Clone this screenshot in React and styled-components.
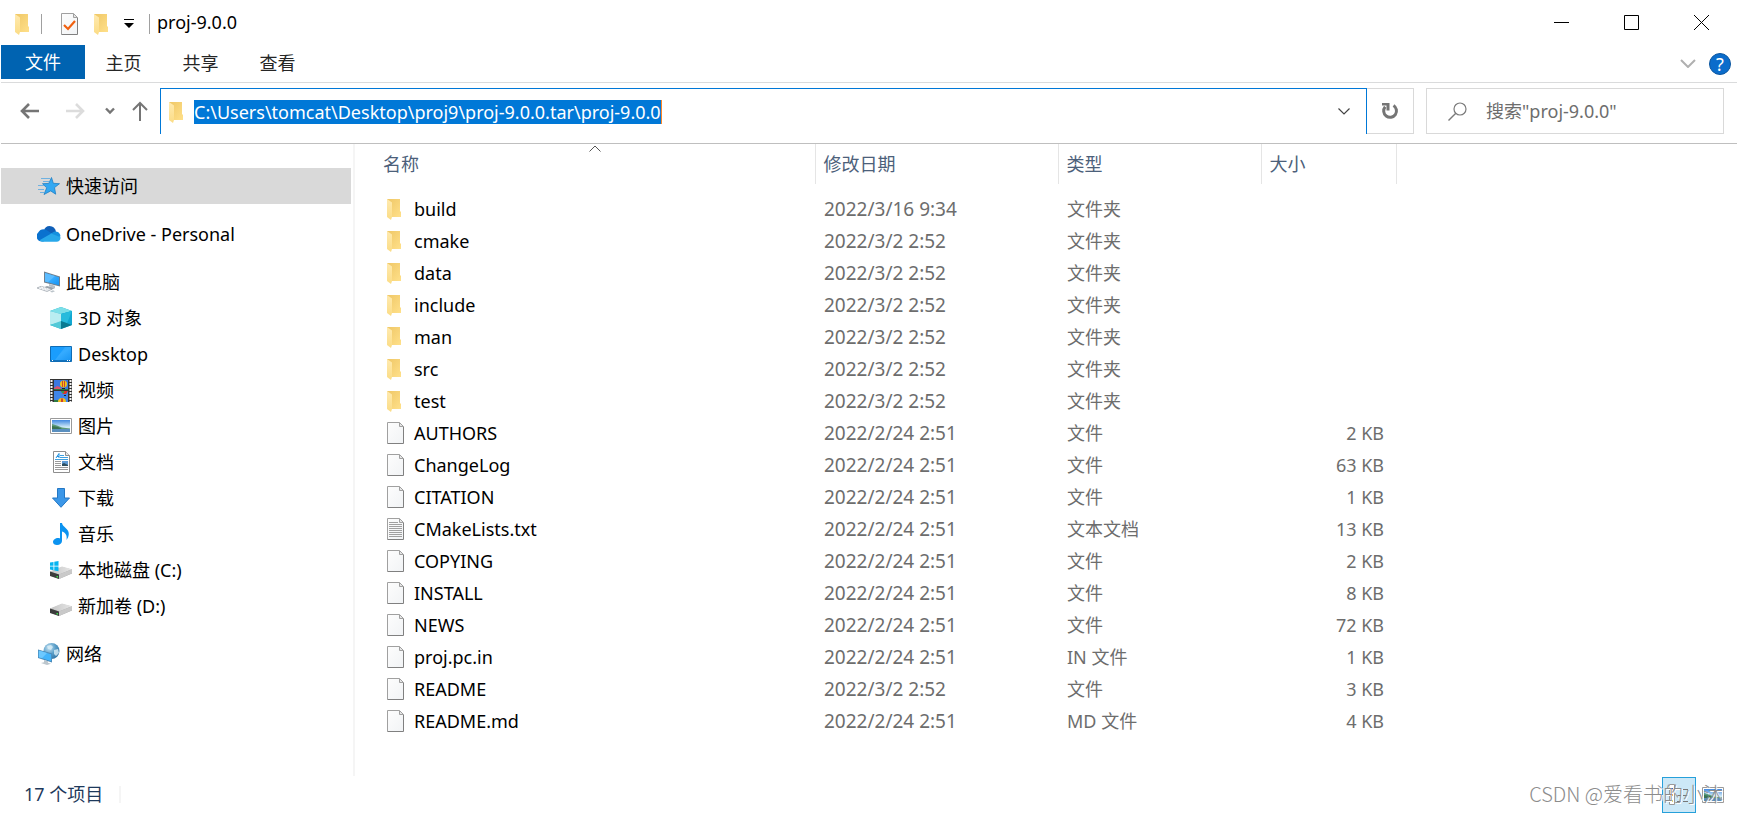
import React, { useEffect, useRef } from "react";
import styled, { createGlobalStyle } from "styled-components";

const quickAccess = [{ name: "快速访问", icon: StarIcon, active: true }];
const oneDrive = [{ name: "OneDrive - Personal", icon: CloudIcon }];
const thisPc = [
  { name: "此电脑", icon: ComputerIcon },
  { name: "3D 对象", icon: CubeIcon, child: true },
  { name: "Desktop", icon: DesktopIcon, child: true },
  { name: "视频", icon: VideoIcon, child: true },
  { name: "图片", icon: PictureIcon, child: true },
  { name: "文档", icon: DocumentIcon, child: true },
  { name: "下载", icon: DownloadIcon, child: true },
  { name: "音乐", icon: MusicIcon, child: true },
  { name: "本地磁盘 (C:)", icon: SystemDriveIcon, child: true },
  { name: "新加卷 (D:)", icon: DriveIcon, child: true },
];
const network = [{ name: "网络", icon: NetworkIcon }];
const groups = [quickAccess, oneDrive, thisPc, network];

const files = [
  { name: "build", date: "2022/3/16 9:34", type: "文件夹", icon: FolderIcon },
  { name: "cmake", date: "2022/3/2 2:52", type: "文件夹", icon: FolderIcon },
  { name: "data", date: "2022/3/2 2:52", type: "文件夹", icon: FolderIcon },
  { name: "include", date: "2022/3/2 2:52", type: "文件夹", icon: FolderIcon },
  { name: "man", date: "2022/3/2 2:52", type: "文件夹", icon: FolderIcon },
  { name: "src", date: "2022/3/2 2:52", type: "文件夹", icon: FolderIcon },
  { name: "test", date: "2022/3/2 2:52", type: "文件夹", icon: FolderIcon },
  { name: "AUTHORS", date: "2022/2/24 2:51", type: "文件", size: "2 KB", icon: FileIcon },
  { name: "ChangeLog", date: "2022/2/24 2:51", type: "文件", size: "63 KB", icon: FileIcon },
  { name: "CITATION", date: "2022/2/24 2:51", type: "文件", size: "1 KB", icon: FileIcon },
  { name: "CMakeLists.txt", date: "2022/2/24 2:51", type: "文本文档", size: "13 KB", icon: TextFileIcon },
  { name: "COPYING", date: "2022/2/24 2:51", type: "文件", size: "2 KB", icon: FileIcon },
  { name: "INSTALL", date: "2022/2/24 2:51", type: "文件", size: "8 KB", icon: FileIcon },
  { name: "NEWS", date: "2022/2/24 2:51", type: "文件", size: "72 KB", icon: FileIcon },
  { name: "proj.pc.in", date: "2022/2/24 2:51", type: "IN 文件", size: "1 KB", icon: FileIcon },
  { name: "README", date: "2022/3/2 2:52", type: "文件", size: "3 KB", icon: FileIcon },
  { name: "README.md", date: "2022/2/24 2:51", type: "MD 文件", size: "4 KB", icon: FileIcon },
];

function App() {
  const pathInput = useRef(null);

  useEffect(() => {
    pathInput.current.focus();
    pathInput.current.select();
  }, []);

  return (
    <Window>
      <GlobalStyle />
      <Gradients />
      <TitleBar>
        <QuickTools>
          <FolderIcon />
          <Divider />
          <IconButton aria-label="属性">
            <CheckedPageIcon />
          </IconButton>
          <IconButton aria-label="新建文件夹">
            <FolderIcon />
          </IconButton>
          <IconButton aria-label="自定义快速访问工具栏">
            <svg width="10" height="9">
              <path d="M0 0h10v1H0zM0 4h10L5 9z" fill="#000" />
            </svg>
          </IconButton>
          <Divider />
        </QuickTools>
        <Title>proj-9.0.0</Title>
        <WindowButton aria-label="最小化">
          <svg width="16" height="16">
            <path d="M0 7.5h15" stroke="#000" />
          </svg>
        </WindowButton>
        <WindowButton aria-label="最大化">
          <svg width="16" height="16">
            <path d="M.5 .5h14v14H.5z" stroke="#000" fill="none" />
          </svg>
        </WindowButton>
        <WindowButton aria-label="关闭">
          <svg width="16" height="16">
            <path d="M0 0l15 15M15 0L0 15" stroke="#000" />
          </svg>
        </WindowButton>
      </TitleBar>

      <Ribbon>
        <FileTab>文件</FileTab>
        <Tab>主页</Tab>
        <Tab>共享</Tab>
        <Tab>查看</Tab>
        <RibbonTools>
          <IconButton aria-label="展开功能区">
            <svg width="16" height="9">
              <path d="M1 1l7 7 7-7" stroke="#b0b0b0" strokeWidth="2" fill="none" />
            </svg>
          </IconButton>
          <HelpButton aria-label="帮助">?</HelpButton>
        </RibbonTools>
      </Ribbon>

      <AddressRow>
        <History>
          <IconButton aria-label="后退">
            <svg width="20" height="18">
              <path d="M19 9H2M9 2L2 9l7 7" stroke="#757575" strokeWidth="2.6" fill="none" />
            </svg>
          </IconButton>
          <IconButton aria-label="前进">
            <svg width="20" height="18">
              <path d="M0 9h17M10 2l7 7-7 7" stroke="#dcdcdc" strokeWidth="2.6" fill="none" />
            </svg>
          </IconButton>
          <IconButton aria-label="最近浏览的位置">
            <svg width="10" height="8">
              <path d="M1 1.5l4 4 4-4" stroke="#757575" strokeWidth="2.4" fill="none" />
            </svg>
          </IconButton>
          <IconButton aria-label="上移">
            <svg width="16" height="20">
              <path d="M8 20V2M1 9l7-7 7 7" stroke="#757575" strokeWidth="2" fill="none" />
            </svg>
          </IconButton>
        </History>
        <AddressBar>
          <FolderIcon />
          <PathInput
            ref={pathInput}
            aria-label="地址"
            defaultValue="C:\Users\tomcat\Desktop\proj9\proj-9.0.0.tar\proj-9.0.0"
          />
          <AddressToggle aria-label="以前的位置">
            <svg width="12" height="7">
              <path d="M.5 .5L6 6 11.5 .5" stroke="#444" strokeWidth="1.2" fill="none" />
            </svg>
          </AddressToggle>
        </AddressBar>
        <RefreshButton aria-label="刷新">
          <svg width="18" height="18" viewBox="0 0 18 18">
            <path d="M12.5 3.5A6.4 6.4 0 1 1 4.2 4.8" stroke="#757575" strokeWidth="3" fill="none" />
            <path d="M1 1h7.500v7.500H5.500V3.500H1z" fill="#757575" />
          </svg>
        </RefreshButton>
        <SearchBox>
          <svg width="19" height="19">
            <circle cx="12" cy="7" r="6" stroke="#7a7a7a" strokeWidth="1.2" fill="none" />
            <path d="M7.8 11.2L.5 18.5" stroke="#7a7a7a" strokeWidth="1.4" />
          </svg>
          <SearchInput aria-label="搜索" placeholder={'搜索"proj-9.0.0"'} />
        </SearchBox>
      </AddressRow>

      <Body>
        <Sidebar>
          {groups.map((items) => (
            <NavGroup key={items[0].name}>
              {items.map(({ name, icon: Icon, child, active }) => (
                <li key={name}>
                  <NavLink href="#" $child={child} $active={active}>
                    <NavIcon>
                      <Icon />
                    </NavIcon>
                    {name}
                  </NavLink>
                </li>
              ))}
            </NavGroup>
          ))}
        </Sidebar>
        <FilePane>
          <FileTable>
            <thead>
              <tr>
                <HeadCell $width={440}>
                  名称
                  <SortMark width="12" height="7">
                    <path d="M.5 6.5L6 1l5.500 5.500" stroke="#555" fill="none" />
                  </SortMark>
                </HeadCell>
                <HeadCell $width={243}>修改日期</HeadCell>
                <HeadCell $width={203}>类型</HeadCell>
                <HeadCell $width={135}>大小</HeadCell>
              </tr>
            </thead>
            <TableBody>
              {files.map(({ name, date, type, size, icon: Icon }) => (
                <tr key={name}>
                  <NameCell>
                    <FileName>
                      <Icon />
                      {name}
                    </FileName>
                  </NameCell>
                  <DateCell>{date}</DateCell>
                  <Cell>{type}</Cell>
                  <SizeCell>{size}</SizeCell>
                </tr>
              ))}
            </TableBody>
          </FileTable>
        </FilePane>
      </Body>

      <StatusBar>
        <ItemCount>17 个项目</ItemCount>
        <ViewButton aria-label="详细信息" $active>
          <DetailsIcon />
        </ViewButton>
        <ViewButton aria-label="大缩略图">
          <PictureIcon />
        </ViewButton>
        <Watermark>CSDN @爱看书的小沐</Watermark>
      </StatusBar>
    </Window>
  );
}

/* shared fills, every icon below refers to them by id */
function Gradients() {
  return (
    <HiddenSvg aria-hidden="true">
      <defs>
        <linearGradient id="folderBack" x1="0" y1="0" x2="1" y2="1">
          <stop offset="0" stopColor="#efc766" />
          <stop offset="1" stopColor="#ffe08a" />
        </linearGradient>
        <linearGradient id="folderFront" x1="0" y1="0" x2="0" y2="1">
          <stop offset="0" stopColor="#ffeab0" />
          <stop offset="1" stopColor="#fbdc85" />
        </linearGradient>
        <linearGradient id="paper" x1="0" y1="0" x2="1" y2="1">
          <stop offset="0" stopColor="#fdfdfd" />
          <stop offset="1" stopColor="#f1f3f5" />
        </linearGradient>
        <linearGradient id="screen" x1="0" y1="0" x2="1" y2="1">
          <stop offset="0" stopColor="#1a9dfd" />
          <stop offset=".5" stopColor="#35abff" />
          <stop offset="1" stopColor="#1593f2" />
        </linearGradient>
        <linearGradient id="sky" x1="0" y1="0" x2="0" y2="1">
          <stop offset="0" stopColor="#3f87e0" />
          <stop offset=".6" stopColor="#d3ecf8" />
          <stop offset="1" stopColor="#8dbbe0" />
        </linearGradient>
        <linearGradient id="metal" x1="0" y1="0" x2="1" y2="0">
          <stop offset="0" stopColor="#c4c4c4" />
          <stop offset="1" stopColor="#e6e6e6" />
        </linearGradient>
        <radialGradient id="globe" cx=".35" cy=".3" r=".8">
          <stop offset="0" stopColor="#c8e4f3" />
          <stop offset=".5" stopColor="#5b9fc9" />
          <stop offset="1" stopColor="#2f6f9f" />
        </radialGradient>
      </defs>
    </HiddenSvg>
  );
}

function FolderIcon() {
  return (
    <svg width="14" height="22" viewBox="0 -1 14 22">
      <path d="M0 0h13v12l1 1v5H4z" fill="url(#folderBack)" />
      <path d="M0 0l5 3.5V18l-1 3-4-3z" fill="url(#folderFront)" />
    </svg>
  );
}

function FileIcon({ children }) {
  return (
    <svg width="17" height="22" viewBox="0 0 17 22">
      <path d="M.5 .5h12l4 4v17H.5z" fill="url(#paper)" />
      <path d="M12.5 .5H.5v21" stroke="#a0a0a0" fill="none" />
      <path d="M16.5 4.5v17H.5" stroke="#808080" fill="none" />
      <path d="M12.5 .5v4h4z" fill="#e6e6e6" stroke="#a0a0a0" />
      {children}
    </svg>
  );
}

function TextFileIcon() {
  return (
    <FileIcon>
      <path
        d="M2 4.5h9M2 6.5h13M2 8.5h13M2 10.5h13M2 12.5h13M2 14.5h13M2 16.5h13M2 18.5h13"
        stroke="#a0a0a0"
      />
    </FileIcon>
  );
}

function CheckedPageIcon() {
  return (
    <FileIcon>
      <path d="M3 12l4 4 7-8" stroke="#f0600f" strokeWidth="2.2" fill="none" />
    </FileIcon>
  );
}

function StarIcon() {
  return (
    <svg width="22" height="18" viewBox="0 0 22 18">
      <path
        d="M13.500 .5l1.800 5.800 6.200 .4-5 3.900 1.200 6.600-5-3.300-6.700 3.600 2.700-6.700L4.500 6.700l6.300-.3z"
        fill="#32a8f2"
        stroke="#1f7fc4"
        strokeWidth=".8"
      />
      <path d="M3 1.500h9M5 4.500h6M0 8.500h6M0 12.500h6M2 15.500h4" stroke="#6fb1e0" />
    </svg>
  );
}

function CloudIcon() {
  return (
    <svg width="24" height="16" viewBox="0 0 24 16">
      <path d="M7 4.5A6 6 0 0 1 12.5 0 7 7 0 0 1 19 5.5l-5 5z" fill="#0f5fb8" />
      <path d="M5 15.5A5.200 5.200 0 0 1 1 6.700 7 7 0 0 1 9.500 4l6 4-9 7.500z" fill="#0a72cf" />
      <path d="M13 8l4-2.300a5 5 0 0 1 6.500 4.500L20 13z" fill="#1490df" />
      <path d="M2.500 14.200L14.300 7.500l9.200 3.700a4 4 0 0 1-4 4.600H5.500a5 5 0 0 1-3-1.600z" fill="#28a8ea" />
    </svg>
  );
}

function ComputerIcon() {
  return (
    <svg width="24" height="22" viewBox="0 0 24 22">
      <path d="M7 .5l16 5v10L7 11.5z" fill="#6e7f8e" />
      <path d="M8 2l14 4.300v8L8 10.500z" fill="url(#screen)" />
      <path d="M8 2l10 3-7 6.300-3-.8z" fill="#5cbcff" />
      <path d="M12 13l6 1.800v2.400l-6-2z" fill="#b9c0c6" />
      <path d="M10 15l8 2-3 1.500-8-2.200z" fill="#9ba4ac" />
      <path d="M0 17l4-1.700 11 3L10 20.500z" fill="#d8dde2" stroke="#9099a1" strokeWidth=".6" />
      <path d="M2 17l9 2.500M4 16l9 2.500" stroke="#fff" strokeDasharray="2 1" />
      <path d="M13 20.500l3-1.200 2 1-3 1.200z" fill="#bcc4ca" />
    </svg>
  );
}

function CubeIcon() {
  return (
    <svg width="22" height="22" viewBox="0 0 22 22">
      <path d="M0 4l11-4 11 4v14l-11 4-11-4z" fill="#17b1cc" />
      <path d="M0 4l11-4 11 4-11 3z" fill="#7cdfe8" />
      <path d="M0 4l11 3v8L0 18z" fill="#b9edf1" />
      <path d="M11 7l11-3v14l-11-4z" fill="#12a8d2" />
      <path d="M11 7l11-3-5 12.300-6-2.300z" fill="#27bbdc" />
      <path d="M0 18l11-4v8z" fill="#52c9d7" />
      <path d="M11 14l11 4-11 4z" fill="#087a91" />
    </svg>
  );
}

function DesktopIcon() {
  return (
    <svg width="22" height="16" viewBox="0 0 22 16">
      <path d="M.5 .5h21v15H.5z" fill="url(#screen)" stroke="#0f6cb5" />
      <path d="M15 1L5 14H1V1z" fill="#1a9dfd" />
      <path d="M1 14.5h20" stroke="#1272bd" />
      <path d="M2 14.5h1M17 14.5h1M19 14.5h1" stroke="#fff" />
    </svg>
  );
}

function VideoIcon() {
  return (
    <svg width="22" height="23" viewBox="0 0 22 23">
      <path d="M0 0h22v23H0z" fill="#333" />
      <path d="M1.5 1v22M20.5 1v22" stroke="#f4f4f4" strokeWidth="2" strokeDasharray="2 1" />
      <path d="M4 1h14v10H4z" fill="#3b78e0" />
      <path d="M4 12h14v11H4z" fill="#3f86ea" />
      <path d="M4 9l3-2 3 1 2 3H4z" fill="#d8546e" />
      <path d="M4 10h14v1H4z" fill="#2d7a45" />
      <circle cx="13.5" cy="5" r="3.5" fill="#f2c21a" />
      <path d="M12 2h1v6h-1zM14 2h1v6h-1z" fill="#d2452c" />
      <path d="M12 9h3v1h-3z" fill="#222" />
      <path d="M11 12h7l-2 3h-3z" fill="#d8372c" />
      <path d="M11 12h3v2h-2z" fill="#3a9a4c" />
      <path d="M14 16h2v1h-2z" fill="#222" />
      <path d="M8 23a4 4 0 0 1 8 0z" fill="#f2c21a" />
      <path d="M4 21h4v2H4z" fill="#2d7a45" />
      <path d="M11 19.5h2V23h-2z" fill="#d2452c" />
    </svg>
  );
}

function PictureIcon() {
  return (
    <svg width="22" height="16" viewBox="0 0 22 16">
      <path d="M.5 .5h21v15H.5z" fill="#fff" stroke="#9a9a9a" />
      <path d="M2 2h18v12H2z" fill="url(#sky)" />
      <path d="M2 6l5 1.500 5 2 8 1v1H2z" fill="#5c9a78" />
      <path d="M2 8l6 1 4 2H2z" fill="#3a7354" />
      <path d="M2 11h18v3H2z" fill="#5a8fbf" />
    </svg>
  );
}

function DocumentIcon() {
  return (
    <svg width="17" height="22" viewBox="0 0 17 22">
      <path d="M.5 .5h12l4 4v17H.5z" fill="#fff" stroke="#8e8e8e" />
      <path d="M12.500 .5v4h4" fill="#e6e6e6" stroke="#8e8e8e" />
      <path d="M3 7l3-4.500V7M4 5.500h2" stroke="#1b8fe0" fill="none" />
      <path d="M7 4.500h4M7 6.500h8M2 8.500h13" stroke="#3fa0e0" />
      <path d="M2 10.500h6M2 12.500h6M2 14.500h6M2 16.500h13M2 18.500h13" stroke="#9a9a9a" />
      <path d="M9 10h6v5H9z" fill="#5f9bd6" />
      <path d="M9 13l2-1 4 2v1H9z" fill="#2f4f60" />
    </svg>
  );
}

function DownloadIcon() {
  return (
    <svg width="18" height="20" viewBox="0 0 18 20">
      <path d="M5.500 .5h7v9.500h5L9 19.300.5 10h5z" fill="#3b97e8" stroke="#2377c4" />
    </svg>
  );
}

function MusicIcon() {
  return (
    <svg width="16" height="22" viewBox="0 0 16 22">
      <path
        d="M7 0h2c.5 4 7 5.500 6.800 11-.1 2.700-1.200 4.500-2.300 6 .8-4.500-.5-7-4.500-8.500V18c0 2.300-2 4-5 4-2.300 0-4-1.200-4-3 0-2.300 2.500-4 5-4 .8 0 1.500.2 2 .4z"
        fill="#0c93f0"
      />
    </svg>
  );
}

function DriveShape() {
  return (
    <>
      <path d="M0 12l12-5 10 2.500v4L9 19 0 15.500z" fill="#a9a9a9" />
      <path d="M0 11.500L12 6.500l10 2.800L9 14.500z" fill="url(#metal)" />
      <path d="M0 11.500l9 3V19l-9-3z" fill="#3b3b3b" />
      <path d="M9 14.500l13-5.200v4L9 19z" fill="#c9c9c9" />
      <path d="M6.500 16h1.500v1.500H6.500z" fill="#3ddb4a" />
    </>
  );
}

function DriveIcon() {
  return (
    <svg width="22" height="20" viewBox="0 -1 22 20">
      <DriveShape />
    </svg>
  );
}

function SystemDriveIcon() {
  return (
    <svg width="22" height="20" viewBox="0 0 22 20">
      <DriveShape />
      <path d="M0 2.600l3.500-.6v3.700H0zM4.300 1.800L8.500 1v4.700H4.300zM0 6.500h3.500v3.700L0 9.600zM4.300 6.500h4.200v4.700l-4.200-.8z" fill="#08b4f0" />
    </svg>
  );
}

function NetworkIcon() {
  return (
    <svg width="22" height="22" viewBox="0 0 22 22">
      <circle cx="13.500" cy="8" r="8" fill="url(#globe)" />
      <path d="M9 3l4-1 2 2-2 3-3-1zM16 7l4-1 1 4-3 3-2-2z" fill="#d9edf6" opacity=".8" />
      <path d="M0 6.500l14 4v9L0 15z" fill="#4c88b5" />
      <path d="M.8 7.600L13.200 11.200v7L.8 14.300z" fill="#43b4fb" />
      <path d="M.8 7.600L9 10 4 15.300.8 14.300z" fill="#6cc8ff" />
      <path d="M6 17l4 1.200v1.600l3 1-4 1.200-6-2 3-.8z" fill="#bcc6cd" />
    </svg>
  );
}

function DetailsIcon() {
  return (
    <svg width="20" height="22" viewBox="0 0 20 22">
      <path d="M.5 .5h5v20h-5z" fill="#fff" stroke="#999" />
      <path d="M2 4h2v2H2z" fill="#2c6fc0" />
      <path d="M2 10h2v2H2z" fill="#b8402a" />
      <path d="M2 16h2v2H2z" fill="#3a8a45" />
      <path d="M8 5.500h4M14 5.500h5M8 11.500h4M14 11.500h5M8 17.500h4M14 17.500h5" stroke="#777" />
    </svg>
  );
}

const GlobalStyle = createGlobalStyle`
  * {
    box-sizing: border-box;
  }
  body {
    margin: 0;
    background-color: #fff;
  }
  body, button, input {
    font-family: "Noto Sans", "Noto Sans CJK SC", sans-serif;
    font-size: 18px;
    line-height: 24px;
  }
  svg {
    display: block;
    flex: none;
  }
`;
const HiddenSvg = styled.svg`
  position: absolute;
  width: 0;
  height: 0;
`;
const Window = styled.div`
  display: flex;
  flex-direction: column;
  min-height: 100vh;
  padding-left: 1px;
  color: #000;
`;
const TitleBar = styled.header`
  display: flex;
  align-items: center;
  height: 45px;
`;
const QuickTools = styled.div`
  display: grid;
  grid-template-columns: 26px 20px 33px 30px 25px 8px;
  align-items: center;
  padding: 2px 0 0 14px;
`;
const Divider = styled.span`
  width: 1px;
  height: 20px;
  background-color: #a0a0a0;
`;
const IconButton = styled.button`
  display: flex;
  padding: 0;
  border: none;
  background: none;
`;
const Title = styled.h1`
  flex: 1;
  margin: 0;
  padding-bottom: 2px;
  font-size: 18px;
  font-weight: 400;
`;
const WindowButton = styled(IconButton)`
  justify-content: center;
  align-items: center;
  width: 70px;
  height: 44px;
`;
const Ribbon = styled.nav`
  display: flex;
  height: 38px;
  border-bottom: 1px solid #dadbdc;
`;
const Tab = styled.button`
  width: 77px;
  height: 36px;
  padding: 0;
  border: none;
  background: none;
  color: #262626;
`;
const FileTab = styled(Tab)`
  width: 84px;
  height: 34px;
  background-color: #0063b1;
  color: #fff;
`;
const RibbonTools = styled.div`
  display: flex;
  align-items: center;
  gap: 13px;
  margin-left: auto;
  padding-right: 6px;
`;
const HelpButton = styled.button`
  width: 22px;
  height: 22px;
  padding: 0;
  border: 1px solid #0b56a0;
  border-radius: 50%;
  background-color: #0a6ccb;
  color: #fff;
  line-height: 20px;
`;
const AddressRow = styled.div`
  display: flex;
  height: 61px;
  padding: 5px 13px 9px 0;
  border-bottom: 1px solid #bfbfbf;
`;
const History = styled.div`
  display: grid;
  grid-template-columns: 46px 39px 27px 16px;
  align-items: center;
  width: 159px;
  padding-left: 19px;
`;
const AddressBar = styled.div`
  display: flex;
  flex: 1;
  align-items: center;
  gap: 11px;
  min-width: 0;
  padding-left: 8px;
  border: 1px solid #0078d7;
  border-bottom: none;
`;
const PathInput = styled.input`
  field-sizing: content;
  min-width: 0;
  height: 24px;
  padding: 0;
  border: none;
  border-right: 1px solid #ff8728;
  outline: none;
  color: #000;
  &::selection {
    background-color: #0078d7;
    color: #fff;
  }
`;
const AddressToggle = styled(IconButton)`
  margin-left: auto;
  padding: 8px 16px;
`;
const RefreshButton = styled(IconButton)`
  justify-content: center;
  align-items: center;
  width: 47px;
  border: 1px solid #d9d9d9;
  border-left: none;
`;
const SearchBox = styled.div`
  display: flex;
  align-items: center;
  gap: 19px;
  width: 298px;
  margin-left: 12px;
  padding-left: 21px;
  border: 1px solid #d9d9d9;
`;
const SearchInput = styled.input`
  flex: 1;
  min-width: 0;
  padding: 0;
  border: none;
  outline: none;
  &::placeholder {
    color: #6d6d6d;
  }
`;
const Body = styled.main`
  display: flex;
  flex: 1;
`;
const Sidebar = styled.nav`
  width: 354px;
  padding: 24px 2px 0 0;
  border-right: 2px solid #f5f5f5;
`;
const NavGroup = styled.ul`
  margin: 0 0 12px;
  padding: 0;
  list-style: none;
`;
const NavLink = styled.a`
  display: flex;
  align-items: center;
  gap: 5px;
  height: 36px;
  padding-left: ${(props) => (props.$child ? "48px" : "36px")};
  background-color: ${(props) => (props.$active ? "#d9d9d9" : "transparent")};
  color: #000;
  text-decoration: none;
`;
const NavIcon = styled.span`
  display: flex;
  justify-content: center;
  width: 24px;
`;
const FilePane = styled.section`
  flex: 1;
  min-width: 0;
  padding-left: 20px;
`;
const FileTable = styled.table`
  border-collapse: collapse;
  table-layout: fixed;
  width: 1021px;
`;
const HeadCell = styled.th`
  position: relative;
  width: ${(props) => props.$width}px;
  height: 40px;
  padding: 0 8px;
  border-right: 1px solid #e5e5e5;
  color: #4c607a;
  font-weight: 400;
  text-align: left;
`;
const SortMark = styled.svg`
  position: absolute;
  top: 1px;
  left: calc(50% - 6px);
`;
const TableBody = styled.tbody`
  &::before {
    content: "";
    display: table-row;
    height: 9px;
  }
`;
const Cell = styled.td`
  height: 32px;
  padding: 0 9px;
  color: #6d6d6d;
`;
const NameCell = styled(Cell)`
  padding-left: 12px;
  color: #000;
`;
const DateCell = styled(Cell)`
  font-size: 19px;
`;
const SizeCell = styled(Cell)`
  padding-right: 12px;
  text-align: right;
`;
const FileName = styled.div`
  display: grid;
  grid-template-columns: 17px 1fr;
  align-items: center;
  gap: 10px;
`;
const StatusBar = styled.footer`
  position: relative;
  display: flex;
  align-items: center;
  height: 37px;
  padding-right: 7px;
`;
const ItemCount = styled.span`
  margin-right: auto;
  padding: 0 16px 0 23px;
  color: #1e395b;
  border-right: 2px solid #f5f5f5;
  line-height: 17px;
`;
const ViewButton = styled(IconButton)`
  justify-content: center;
  align-items: center;
  width: 34px;
  height: 36px;
  border: 1px solid ${(props) => (props.$active ? "#26a0da" : "transparent")};
  background-color: ${(props) => (props.$active ? "#cce8f7" : "transparent")};
`;
const Watermark = styled.span`
  position: absolute;
  right: 14px;
  bottom: 7px;
  color: #8c8c8c;
  font-family: "Noto Sans CJK SC", sans-serif;
  font-size: 20px;
  font-weight: 300;
  text-shadow: 1px 1px 0 #fff;
  pointer-events: none;
`;

export default App;
